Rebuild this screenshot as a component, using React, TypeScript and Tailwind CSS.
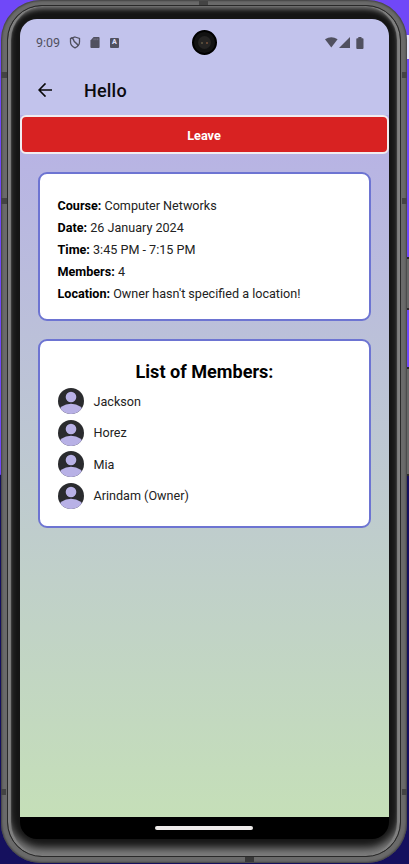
import React from "react";

const details = [
  ["Course:", "Computer Networks"],
  ["Date:", "26 January 2024"],
  ["Time:", "3:45 PM - 7:15 PM"],
  ["Members:", "4"],
  ["Location:", "Owner hasn't specified a location!"],
];

const members = ["Jackson", "Horez", "Mia", "Arindam (Owner)"];

function Avatar() {
  return (
    <svg viewBox="0 0 26 26" className="size-[26px] shrink-0">
      <defs>
        <clipPath id="avatar">
          <circle cx="13" cy="13" r="13" />
        </clipPath>
      </defs>
      <g clipPath="url(#avatar)">
        <rect width="26" height="26" fill="#2a2b2e" />
        <circle cx="13" cy="9" r="5.3" fill="#b8b1e6" />
        <ellipse cx="13" cy="25" rx="13" ry="9.2" fill="#b8b1e6" />
      </g>
    </svg>
  );
}

function StatusBar() {
  return (
    <div className="relative flex h-[47px] items-center pl-4 pr-[25px] text-[#50505f]">
      <span className="w-[33px] text-[12.500px] leading-4">9:09</span>
      <svg viewBox="0 0 12 13" className="h-[13px] w-3" fill="none" stroke="currentColor" strokeWidth="1.300">
        <path d="M6 1 10.500 2.500V6c0 2.700-1.800 4.700-4.500 5.800C3.300 10.700 1.500 8.700 1.500 6V2.500Z" />
        <path d="M2 2C3.700 2.100 4.500 3 4.800 4.500 5.200 6.500 7 6 9.200 9.600" />
      </svg>
      <svg viewBox="0 0 10 12" className="ml-[9px] h-[11px] w-[10px]">
        <path fill="currentColor" d="M3.500 0H9q1 0 1 1v10q0 1-1 1H1q-1 0-1-1V3.800Z" />
        <path stroke="#9797ae" strokeWidth=".6" d="M4 1.500v2M6 1.500v2M8 1.500v2" />
      </svg>
      <span className="ml-[10px] flex h-[10px] w-[9px] items-center justify-center rounded-[1px] bg-[#50505f] text-[7px] font-black leading-none text-[#dcdcf5]">A</span>
      <span className="absolute left-[172px] top-[11px] flex size-[25px] items-center justify-center rounded-full border-2 border-black bg-[#121212]">
        <span className="flex size-[13px] items-center justify-center gap-[3px] rounded-full bg-[#252423]">
          <span className="size-[2px] rounded-full bg-[#625844]" />
          <span className="size-[2px] rounded-full bg-[#79513a]" />
        </span>
      </span>
      <svg viewBox="0 0 39 12" className="ml-auto h-3 w-[39px]" fill="currentColor">
        <path d="M0 2.300Q6.300-2 12.600 2.300L6.300 10.500Z" />
        <path d="M14 11 25 0v11Z" />
        <path d="M33.300 0h3.200v1.200h1.200q.8 0 .8 1V11q0 1-1 1h-5.200q-1 0-1-1V2.200q0-1 .8-1h1.200Z" />
      </svg>
    </div>
  );
}

function Screen() {
  return (
    <div className="flex h-[820px] w-[369px] flex-col overflow-hidden rounded-[17px] bg-black">
      <header className="h-24 shrink-0 bg-[#c2c3ec]">
        <StatusBar />
        <div className="flex h-[48px] items-center pl-[18px]">
          <svg viewBox="0 0 14 14" className="size-[14px]" fill="none" stroke="#080808" strokeWidth="1.600">
            <path d="M7.500.4 1 7l6.500 6.600M1 7H14" />
          </svg>
          <h1 className="ml-8 pt-px text-[18px] font-medium leading-6 tracking-[0.2px] text-[#0b0b0f]">Hello</h1>
        </div>
      </header>
      <main className="flex h-[702px] shrink-0 flex-col bg-linear-to-b from-[#b7b1e6] to-[#c5dfb8]">
        <button className="h-[39px] w-full shrink-0 rounded-[6px] border-2 border-[#f1edf0] bg-[#d82222] pr-px pt-[3px] text-[12.700px] font-bold text-white">Leave</button>
        <section className="mx-[18px] mt-[18px] h-[149px] shrink-0 rounded-[9px] border-2 border-[#6d74d2] bg-white pl-[17.500px] pt-[21px] text-[12.600px] leading-[22px] text-[#222]">
          {details.map(([label, value]) => (
            <p key={label}>
              <strong className="font-bold text-black">{label}</strong> {value}
            </p>
          ))}
        </section>
        <section className="mx-[18px] mt-[18px] h-[189px] shrink-0 rounded-[9px] border-2 border-[#6d74d2] bg-white px-[18px] pt-[19px]">
          <h2 className="text-center text-[18.100px] font-bold leading-6 text-black">List of Members:</h2>
          <ul className="mt-[4px] flex flex-col gap-[5.500px]">
            {members.map((name) => (
              <li key={name} className="flex items-center text-[12.600px] leading-5 text-[#222]">
                <Avatar />
                <span className="ml-[9.500px] pt-px">{name}</span>
              </li>
            ))}
          </ul>
        </section>
      </main>
      <footer className="flex h-[22px] shrink-0 justify-center pr-px pt-[9px]">
        <span className="h-[4px] w-[98px] rounded-full bg-[#eeebea]" />
      </footer>
    </div>
  );
}

export default function App() {
  return (
    <div className="relative h-[864px] w-[409px] overflow-hidden bg-linear-to-b from-[#7048f8] from-[54.900%] to-[#15105e] to-[55%] font-[Roboto,'Liberation_Sans',sans-serif]">
      <span className="absolute right-0 top-[35px] h-6 w-1 bg-[#e8e4fa]" />
      <span className="absolute right-0 top-[257px] h-[53px] w-[5px] border-y-2 border-[#292929] bg-[#686868]" />
      <span className="absolute right-0 top-[367px] h-[109px] w-[5px] border-y-2 border-[#292929] bg-[#686868]" />
      <div className="relative ml-px h-[863px] w-[406px] rounded-[40px] bg-[#6a6a6a] px-[6px] pb-[6px] pt-[5px] shadow-[inset_0_0_2px_1px_#404040]">
        <span className="absolute left-0 top-[72px] h-[6px] w-[6px] bg-[#444]" />
        <span className="absolute left-0 top-[198px] h-[6px] w-[6px] bg-[#444]" />
        <span className="absolute left-0 top-[789px] h-[6px] w-[5px] bg-[#444]" />
        <span className="absolute right-0 top-[72px] h-[6px] w-[5px] bg-[#444]" />
        <span className="absolute right-0 top-[198px] h-[6px] w-[5px] bg-[#444]" />
        <span className="absolute right-0 top-[789px] h-[6px] w-[5px] bg-[#444]" />
        <span className="absolute bottom-px left-[244px] h-[5px] w-[9px] bg-[#393939]" />
        <span className="absolute left-[198px] top-px h-[4px] w-[9px] bg-[#444]" />
        <div className="h-full rounded-[35px] border border-[#292929] bg-[#151515] pl-3 pt-[13px] shadow-[inset_3px_0_1px_#808080,inset_-3px_0_1px_#808080,inset_0_3px_5px_#777,inset_0_-8px_8px_#808080]">
          <Screen />
        </div>
      </div>
    </div>
  );
}
